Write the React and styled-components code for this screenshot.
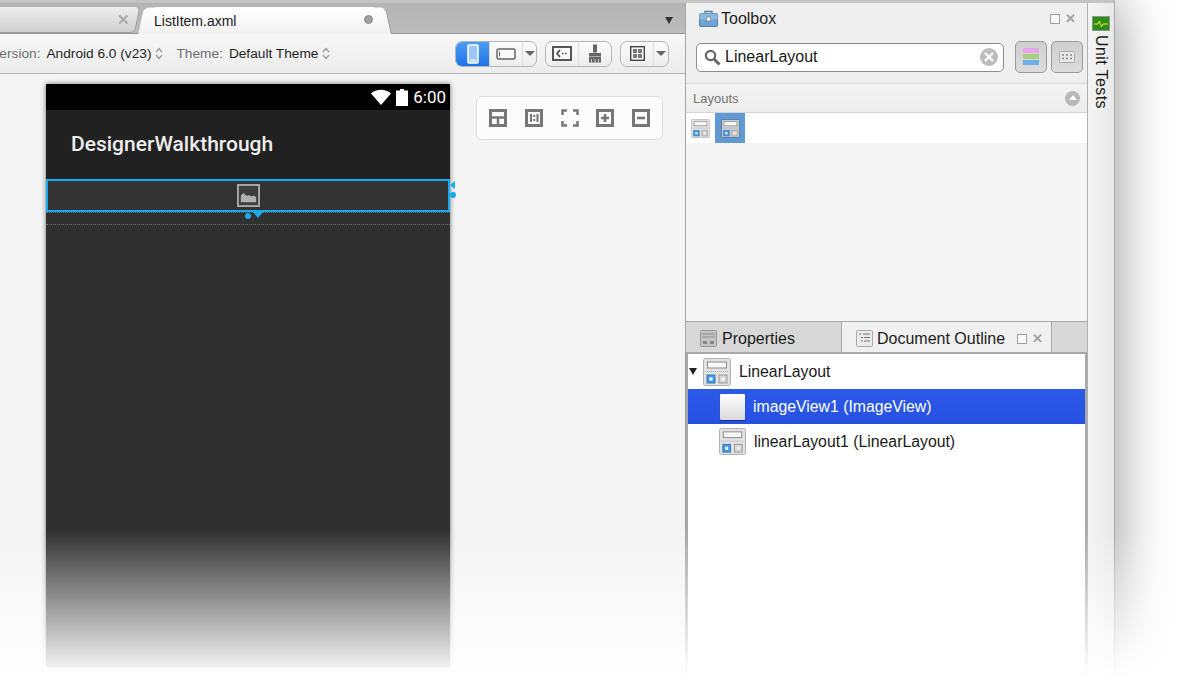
import styled, { createGlobalStyle } from 'styled-components';

const GlobalStyle = createGlobalStyle`
  html, body { margin: 0; padding: 0; background: #fff; }
  body { font-family: "Liberation Sans", Arial, sans-serif; }
`;

const Page = styled.div`
  position: relative;
  width: 1184px;
  height: 680px;
  overflow: hidden;
  background: #fff;
`;

const Fade = styled.div`
  position: absolute;
  left: 0;
  right: 0;
  top: 530px;
  bottom: 0;
  background: linear-gradient(to bottom, rgba(255,255,255,0), rgba(255,255,255,0.93) 137px, #fff 150px);
`;

const Window = styled.div`
  display: flex;
  width: 1115px;
  height: 680px;
  box-sizing: border-box;
  border-top: 3px solid #c4c4c4;
  border-right: 1px solid #a8a8a8;
  box-shadow: 4px 0 50px rgba(0,0,0,0.38);
  background: #f4f4f4;
`;

const Editor = styled.div`
  width: 686px;
  flex: none;
  display: flex;
  flex-direction: column;
  border-right: 1px solid #a4a4a4;
  box-sizing: border-box;
`;

const TabBar = styled.div`
  height: 30px;
  flex: none;
  display: flex;
  align-items: stretch;
  background: linear-gradient(#b4b4b4, #bcbcbc);
  border-bottom: 1px solid #949494;
`;

const InactiveTab = styled.div`
  width: 141px;
  margin-top: 4px;
  background: linear-gradient(#eeeeee, #cfcfcf);
  border-bottom-right-radius: 5px;
  border-top-right-radius: 5px;
  border-right: 1px solid #9a9a9a;
  border-bottom: 1px solid #9a9a9a;
  transform: skewX(-12deg);
  transform-origin: bottom right;
  margin-left: -6px;
  display: flex;
  align-items: center;
  justify-content: flex-end;
  padding-right: 7px;
  box-sizing: border-box;
  flex: none;
`;

const TabClose = styled.span`
  color: #aaa;
  font-size: 15px;
  font-weight: bold;
  transform: skewX(12deg);
`;

const ActiveTab = styled.div`
  position: relative;
  width: 238px;
  margin: 4px 0 -1px 11px;
  background: linear-gradient(#fff, #f2f2f2);
  border-radius: 6px 6px 0 0;
  display: flex;
  align-items: center;
  justify-content: space-between;
  padding: 0 11px 0 8px;
  box-sizing: border-box;
  font-size: 14px;
  color: #222;

  &::before, &::after {
    content: '';
    position: absolute;
    top: 0;
    bottom: 0;
    width: 12px;
    background: inherit;
    border-top: 1px solid #d8d8d8;
  }
  &::before { left: -5px; transform: skewX(-12deg); border-top-left-radius: 6px; }
  &::after { right: -5px; transform: skewX(12deg); border-top-right-radius: 6px; border-right: 1px solid #999; }
`;

const TabLabel = styled.span`
  position: relative;
  z-index: 1;
`;

const ModifiedDot = styled.span`
  position: relative;
  z-index: 1;
  width: 9px;
  height: 9px;
  border-radius: 50%;
  background: #a0a0a0;
  border: 1px solid #888;
  box-sizing: border-box;
  margin-top: -3px;
`;

const TabMenu = styled.div`
  margin: 14px 12px 0 auto;
  width: 0;
  height: 0;
  border-left: 4px solid transparent;
  border-right: 4px solid transparent;
  border-top: 7px solid #333;
`;

const Toolbar = styled.div`
  height: 39px;
  flex: none;
  display: flex;
  align-items: center;
  padding: 0 16px 0 0;
  background: linear-gradient(#f7f7f7, #ececec);
  border-bottom: 1px solid #b4b4b4;
  font-size: 13.7px;
`;

const SelectLabel = styled.span`
  color: #6f6f6f;
  margin: 0 6px 1px ${p => p.$first ? '-9px' : '13px'};
  white-space: nowrap;
`;

const SelectValue = styled.span`
  color: #1e1e1e;
  margin-bottom: 1px;
  white-space: nowrap;
`;

const Stepper = styled.svg`
  width: 8px;
  height: 13px;
  margin: 0 0 1px 4px;
  flex: none;
`;

const ButtonGroups = styled.div`
  margin-left: auto;
  display: flex;
  gap: 8px;
`;

const ButtonGroup = styled.div`
  display: flex;
  height: 26px;
  border: 1px solid #b5b5b5;
  border-radius: 7px;
  overflow: hidden;
  background: linear-gradient(#fbfbfb, #eeeeee);
  box-sizing: border-box;
`;

const ToolButton = styled.div`
  width: ${p => p.$w || 33}px;
  box-sizing: border-box;
  display: flex;
  align-items: center;
  justify-content: center;
  border-right: 1px solid #dddddd;
  background: ${p => p.$active ? 'linear-gradient(#4d9cf4, #1f73e8)' : 'transparent'};
  &:last-child { border-right: none; }
`;

const MenuCaret = styled.span`
  width: 0;
  height: 0;
  border-left: 5px solid transparent;
  border-right: 5px solid transparent;
  border-top: 5px solid #666;
`;

const Canvas = styled.div`
  flex: 1;
  display: flex;
  align-items: flex-start;
  padding: 10px 0 0 46px;
  background: #f4f4f4;
`;

const Phone = styled.div`
  width: 404px;
  height: 583px;
  flex: none;
  display: flex;
  flex-direction: column;
  background: #303030;
  box-shadow: 0 0 5px rgba(0,0,0,0.55);
`;

const StatusBar = styled.div`
  height: 26px;
  flex: none;
  background: #000;
  color: #fff;
  display: flex;
  align-items: center;
  justify-content: flex-end;
  gap: 5px;
  padding-right: 4px;
  font-family: Roboto, sans-serif;
  font-size: 17px;
`;

const ActionBar = styled.div`
  height: 69px;
  flex: none;
  background: #212121;
  display: flex;
  align-items: center;
  padding: 0 0 1px 25px;
  box-sizing: border-box;
  color: #eeeeee;
  font-family: Roboto, sans-serif;
  font-weight: 500;
  font-size: 21px;
`;

const SelectedRow = styled.div`
  position: relative;
  height: 33px;
  flex: none;
  box-sizing: border-box;
  border: 2px solid #18aaee;
  background: #333;
  display: flex;
  align-items: center;
  justify-content: center;
`;

const HandleDot = styled.span`
  position: absolute;
  ${p => p.$place}
  width: 6px;
  height: 6px;
  border-radius: 50%;
  background: #18aaee;
`;

const HandleArrowDown = styled.span`
  position: absolute;
  left: 205px;
  bottom: -8px;
  width: 0;
  height: 0;
  border-left: 5px solid transparent;
  border-right: 5px solid transparent;
  border-top: 6px solid #18aaee;
`;

const HandleArrowLeft = styled.span`
  position: absolute;
  right: -7px;
  top: 0;
  width: 0;
  height: 0;
  border-top: 4px solid transparent;
  border-bottom: 4px solid transparent;
  border-right: 5px solid #18aaee;
`;

const DottedGap = styled.div`
  height: 13px;
  flex: none;
  box-sizing: border-box;
  border-top: 1px dotted #6a6a6a;
  border-bottom: 1px dotted #6a6a6a;
`;

const ZoomPanel = styled.div`
  margin: 12px 0 0 26px;
  width: 187px;
  height: 44px;
  box-sizing: border-box;
  background: #fcfcfc;
  border: 1px solid #dedede;
  border-radius: 6px;
  display: flex;
  align-items: center;
  justify-content: space-between;
  padding: 0 12px;
`;

const SidePanel = styled.div`
  width: 402px;
  flex: none;
  display: flex;
  flex-direction: column;
  border-right: 1px solid #b0b0b0;
  box-sizing: border-box;
  background: #f4f4f4;
`;

const ToolboxPane = styled.div`
  height: 318px;
  flex: none;
  display: flex;
  flex-direction: column;
`;

const PaneHeader = styled.div`
  height: 31px;
  flex: none;
  display: flex;
  align-items: center;
  padding: 0 11px 0 13px;
  background: #efefef;
  font-size: 16px;
  color: #1c1c1c;
  gap: 3px;
`;

const WindowControls = styled.div`
  margin-left: auto;
  display: flex;
  align-items: center;
  gap: 5px;
`;

const MaxBox = styled.span`
  width: 8px;
  height: 8px;
  border: 1px solid #a0a0a0;
  background: #f8f8f8;
`;

const CloseX = styled.span`
  color: #a2a2a2;
  font-size: 13px;
  font-weight: bold;
  line-height: 10px;
`;

const SearchRow = styled.div`
  height: 50px;
  flex: none;
  box-sizing: border-box;
  display: flex;
  align-items: center;
  gap: 4px;
  padding: 0 3px 3px 10px;
  background: #efefef;
  border-bottom: 1px solid #dcdcdc;
`;

const SearchBox = styled.div`
  width: 308px;
  height: 29px;
  box-sizing: border-box;
  margin-right: 7px;
  background: #fff;
  border: 1px solid #8c8c8c;
  border-radius: 5px;
  display: flex;
  align-items: center;
  padding: 0 5px 0 7px;
  gap: 4px;
  font-size: 16px;
  color: #1a1a1a;
`;

const ClearButton = styled.span`
  margin-left: auto;
  width: 18px;
  height: 18px;
  border-radius: 50%;
  background: #bdbdbd;
  display: flex;
  align-items: center;
  justify-content: center;
`;

const ViewToggle = styled.div`
  width: 32px;
  height: 32px;
  box-sizing: border-box;
  border: 1px solid #9a9a9a;
  border-radius: 5px;
  background: linear-gradient(#cfcfcf, #dcdcdc);
  display: flex;
  align-items: center;
  justify-content: center;
`;

const SectionHeader = styled.div`
  height: 29px;
  flex: none;
  display: flex;
  align-items: center;
  justify-content: space-between;
  padding: 0 7px;
  box-sizing: border-box;
  background: linear-gradient(#f3f3f3, #ededed);
  border-bottom: 1px solid #d4d4d4;
  font-size: 13px;
  color: #737373;
`;

const CollapseDot = styled.span`
  width: 15px;
  height: 15px;
  border-radius: 50%;
  background: #b8b8b8;
  display: flex;
  align-items: center;
  justify-content: center;
  &::after {
    content: '';
    border-left: 4px solid transparent;
    border-right: 4px solid transparent;
    border-bottom: 5px solid #fff;
    margin-top: -1px;
  }
`;

const ItemRow = styled.div`
  height: 30px;
  flex: none;
  background: #fff;
  display: flex;
`;

const ItemCell = styled.div`
  width: ${p => p.$w || 30}px;
  display: flex;
  align-items: center;
  justify-content: center;
  background: ${p => p.$selected ? '#5f9ad6' : 'transparent'};
`;

const BottomTabs = styled.div`
  height: 30px;
  flex: none;
  display: flex;
  background: #d8d8d8;
  border-top: 1px solid #a8a8a8;
  border-bottom: 1px solid #a8a8a8;
`;

const PaneTab = styled.div`
  width: ${p => p.$w}px;
  flex: none;
  box-sizing: border-box;
  display: flex;
  align-items: center;
  gap: ${p => p.$active ? 4 : 5}px;
  padding: 3px 8px 0 14px;
  font-size: 16px;
  color: #1c1c1c;
  background: ${p => p.$active ? '#f0f0f0' : 'transparent'};
  border-left: ${p => p.$active ? '1px solid #a8a8a8' : 'none'};
  border-right: ${p => p.$active ? '1px solid #a8a8a8' : 'none'};
`;

const Tree = styled.div`
  flex: 1;
  background: #fff;
  border: 1px solid #a8a8a8;
  border-left-width: 2px;
  border-right-width: 2px;
  font-size: 15.8px;
  color: #1a1a1a;
`;

const TreeRow = styled.div`
  height: 35px;
  box-sizing: border-box;
  display: flex;
  align-items: center;
  gap: 8px;
  padding-left: ${p => p.$indent}px;
  background: ${p => p.$selected ? 'linear-gradient(#2c5ae8, #2650e2)' : 'transparent'};
  color: ${p => p.$selected ? '#fff' : '#1a1a1a'};
`;

const Disclosure = styled.span`
  width: 0;
  height: 0;
  border-left: 4.5px solid transparent;
  border-right: 4.5px solid transparent;
  border-top: 7px solid #222;
  margin-right: -2px;
`;

const BlankImage = styled.span`
  width: 25px;
  height: 26px;
  flex: none;
  border-radius: 1px;
  background: linear-gradient(#fff, #d8d8d8);
  box-shadow: 0 1px 1px #1a2f80;
`;

const RightRail = styled.div`
  flex: 1;
  background: linear-gradient(to right, #f4f4f4, #e8e8e8);
  display: flex;
  flex-direction: column;
  align-items: center;
  padding-top: 13px;
  gap: 4px;
`;

const RailLabel = styled.span`
  writing-mode: vertical-rl;
  font-size: 16px;
  color: #1a1a1a;
  letter-spacing: 0.4px;
`;

function Chevrons() {
  return (
    <Stepper viewBox="0 0 8 13">
      <path d="M1 5l3-3.5L7 5M1 8l3 3.5L7 8" fill="none" stroke="#9a9a9a" strokeWidth="1.3" />
    </Stepper>
  );
}

function LayoutIcon({ size = 28, dark }) {
  return (
    <svg width={size} height={size} viewBox="0 0 28 28">
      <rect x="0.5" y="0.5" width="27" height="27" rx="2" fill={dark ? '#c8ccd2' : '#e2e2e2'} stroke={dark ? '#33506e' : '#b0b0b0'} />
      <rect x="4.5" y="4" width="19" height="6" fill="#f7f7f7" stroke="#8a8a8a" />
      <path d="M2 13.5h24" stroke="#aaa" strokeDasharray="1 1" />
      <rect x="4" y="17" width="8" height="8" fill="#4a9be0" stroke="#2d78bd" />
      <rect x="6.5" y="19.5" width="3" height="3" fill="#fff" />
      <rect x="16" y="17" width="8" height="8" fill="#d4d4d4" stroke="#9a9a9a" />
      <rect x="18.5" y="19.5" width="3" height="3" fill="#f4f4f4" />
    </svg>
  );
}

function ToolboxIcon() {
  return (
    <svg width="19" height="17" viewBox="0 0 19 17">
      <path d="M6 4V1.5h7V4" fill="none" stroke="#5c7d9c" strokeWidth="1.4" />
      <rect x="0.5" y="3.5" width="18" height="13" rx="1.5" fill="#6fa3d2" stroke="#55809f" />
      <rect x="0.5" y="3.5" width="18" height="6" fill="#8ab8de" />
      <rect x="7.5" y="7" width="4" height="4" fill="#f2f2f2" stroke="#5c7d9c" strokeWidth="0.6" />
    </svg>
  );
}

const zoomStroke = { fill: 'none', stroke: '#777', strokeWidth: 3 };

const zoomIcons = [
  <g key="a" {...zoomStroke}><rect x="1.5" y="1.5" width="15" height="15" /><path d="M1 8.5h16M9 8.5v8" strokeWidth="2.5" /></g>,
  <g key="b" {...zoomStroke}><rect x="1.5" y="1.5" width="15" height="15" /><path d="M6 5v8M12.5 5v8M9.2 6v2M9.2 10v2" strokeWidth="2" /></g>,
  <g key="c" {...zoomStroke}><path d="M1.5 6V1.5H6M12 1.5h4.5V6M16.5 12v4.5H12M6 16.5H1.5V12" strokeWidth="2.5" /></g>,
  <g key="d" {...zoomStroke}><rect x="1.5" y="1.5" width="15" height="15" /><path d="M5 9h8M9 5v8" strokeWidth="2.6" /></g>,
  <g key="e" {...zoomStroke}><rect x="1.5" y="1.5" width="15" height="15" /><path d="M5 9h8" strokeWidth="2.6" /></g>,
];

export default function App() {
  return (
    <Page>
      <GlobalStyle />
      <Window>
        <Editor>
          <TabBar>
            <InactiveTab><TabClose>✕</TabClose></InactiveTab>
            <ActiveTab>
              <TabLabel>ListItem.axml</TabLabel>
              <ModifiedDot />
            </ActiveTab>
            <TabMenu />
          </TabBar>
          <Toolbar>
            <SelectLabel $first>Version:</SelectLabel>
            <SelectValue>Android 6.0 (v23)</SelectValue>
            <Chevrons />
            <SelectLabel>Theme:</SelectLabel>
            <SelectValue>Default Theme</SelectValue>
            <Chevrons />
            <ButtonGroups>
              <ButtonGroup>
                <ToolButton $active $w={34}>
                  <svg width="12" height="20" viewBox="0 0 12 20"><rect x="1" y="1" width="10" height="18" rx="1" fill="#9cc6f8" stroke="#fff" strokeWidth="1.6" /><path d="M3 16.5h6" stroke="#fff" strokeWidth="1.5" /></svg>
                </ToolButton>
                <ToolButton>
                  <svg width="20" height="12" viewBox="0 0 20 12"><rect x="1" y="1" width="18" height="10" rx="1.5" fill="#fafafa" stroke="#666" strokeWidth="1.5" /><path d="M3.5 3.5v5" stroke="#666" /></svg>
                </ToolButton>
                <ToolButton $w={13}><MenuCaret /></ToolButton>
              </ButtonGroup>
              <ButtonGroup>
                <ToolButton>
                  <svg width="20" height="15" viewBox="0 0 20 15"><rect x="1" y="1" width="18" height="13" fill="#fafafa" stroke="#444" strokeWidth="1.8" /><path d="M8 4L5 7.5 8 11M10 7.5h1.5M13 7.5h1.5" fill="none" stroke="#444" strokeWidth="1.6" /></svg>
                </ToolButton>
                <ToolButton $w={32}>
                  <svg width="14" height="19" viewBox="0 0 14 19"><path d="M5 0.5h4v8H5zM1 9h12v3.5H1zM1 13h12v5.5H1z" fill="#666" /><path d="M3.5 15v3.5M7 15v3.5M10.5 15v3.5" stroke="#ddd" strokeWidth="0.8" /></svg>
                </ToolButton>
              </ButtonGroup>
              <ButtonGroup>
                <ToolButton>
                  <svg width="15" height="15" viewBox="0 0 15 15"><rect x="0.7" y="0.7" width="13.6" height="13.6" fill="#fafafa" stroke="#444" strokeWidth="1.4" /><path d="M3 3h4v4H3zM8 3h4v4H8zM3 8h4v4H3zM8 8h4v4H8z" fill="#777" /></svg>
                </ToolButton>
                <ToolButton $w={14}><MenuCaret /></ToolButton>
              </ButtonGroup>
            </ButtonGroups>
          </Toolbar>
          <Canvas>
            <Phone>
              <StatusBar>
                <svg width="20" height="16" viewBox="0 0 20 16"><path d="M0 4.5C5.5 -0.5 14.5 -0.5 20 4.5L10 16z" fill="#fff" /></svg>
                <svg width="12" height="17" viewBox="0 0 12 17"><path d="M4 0h4v1.5h4V17H0V1.5h4z" fill="#fff" /></svg>
                <span>6:00</span>
              </StatusBar>
              <ActionBar>DesignerWalkthrough</ActionBar>
              <SelectedRow>
                <svg width="23" height="23" viewBox="0 0 24 24">
                  <rect x="1" y="1" width="22" height="22" fill="#3c3c3c" stroke="#a8a8a8" strokeWidth="2" />
                  <path d="M4 19v-7l3-2.500 3 3 2-1 3 1.500 2-1 3 1.500v5.500z" fill="#b0b0b0" />
                </svg>
                <HandleArrowLeft />
                <HandleDot $place="right: -8px; top: 11px;" />
                <HandleDot $place="left: 197px; bottom: -9px;" />
                <HandleArrowDown />
              </SelectedRow>
              <DottedGap />
            </Phone>
            <ZoomPanel>
              {zoomIcons.map((icon, i) => (
                <svg key={i} width="18" height="18" viewBox="0 0 18 18">{icon}</svg>
              ))}
            </ZoomPanel>
          </Canvas>
        </Editor>

        <SidePanel>
          <ToolboxPane>
            <PaneHeader>
              <ToolboxIcon />
              Toolbox
              <WindowControls>
                <MaxBox />
                <CloseX>✕</CloseX>
              </WindowControls>
            </PaneHeader>
            <SearchRow>
              <SearchBox>
                <svg width="17" height="17" viewBox="0 0 17 17"><circle cx="6.5" cy="6.5" r="4.7" fill="none" stroke="#666" strokeWidth="2.2" /><path d="M10 10l5.500 5.500" stroke="#666" strokeWidth="2.8" /></svg>
                LinearLayout
                <ClearButton>
                  <svg width="10" height="10" viewBox="0 0 10 10"><path d="M1 1l8 8M9 1l-8 8" stroke="#fff" strokeWidth="2.4" /></svg>
                </ClearButton>
              </SearchBox>
              <ViewToggle>
                <svg width="16" height="18" viewBox="0 0 16 18"><rect width="16" height="5" fill="#e8a4e8" /><rect y="6" width="16" height="5" fill="#a9d07c" /><rect y="12" width="16" height="5" fill="#6db0ea" /></svg>
              </ViewToggle>
              <ViewToggle>
                <svg width="16" height="12" viewBox="0 0 16 12"><rect x="0.5" y="0.5" width="15" height="11" rx="1" fill="#e8e8e8" stroke="#aaa" /><path d="M3 4h2M7 4h2M11 4h2M3 7.5h2M7 7.5h2M11 7.5h2" stroke="#888" strokeWidth="1.5" /></svg>
              </ViewToggle>
            </SearchRow>
            <SectionHeader>
              Layouts
              <CollapseDot />
            </SectionHeader>
            <ItemRow>
              <ItemCell $w={29}><LayoutIcon size={19} /></ItemCell>
              <ItemCell $selected><LayoutIcon size={19} dark /></ItemCell>
            </ItemRow>
          </ToolboxPane>
          <BottomTabs>
            <PaneTab $w={155}>
              <svg width="17" height="17" viewBox="0 0 17 17"><rect x="0.5" y="0.5" width="16" height="16" rx="1" fill="#c4c4c4" stroke="#999" /><path d="M2 4h13M2 7h13" stroke="#8a8a8a" /><rect x="3" y="11" width="4" height="3" fill="#888" /><rect x="10" y="11" width="4" height="3" fill="#888" /></svg>
              Properties
            </PaneTab>
            <PaneTab $active $w={211}>
              <svg width="17" height="17" viewBox="0 0 17 17"><rect x="0.5" y="0.5" width="16" height="16" rx="1" fill="#eaeaea" stroke="#aaa" /><path d="M3 4h2M7 4h7M5 7.5h2M8 7.5h6M5 11h2M8 11h6" stroke="#777" /></svg>
              Document Outline
              <WindowControls>
                <MaxBox />
                <CloseX>✕</CloseX>
              </WindowControls>
            </PaneTab>
          </BottomTabs>
          <Tree>
            <TreeRow $indent={1}>
              <Disclosure />
              <LayoutIcon />
              LinearLayout
            </TreeRow>
            <TreeRow $indent={32} $selected>
              <BlankImage />
              imageView1 (ImageView)
            </TreeRow>
            <TreeRow $indent={31}>
              <LayoutIcon size={27} />
              linearLayout1 (LinearLayout)
            </TreeRow>
          </Tree>
        </SidePanel>

        <RightRail>
          <svg width="18" height="15" viewBox="0 0 18 15"><rect x="0.5" y="0.5" width="17" height="14" fill="#2f8c18" stroke="#8a9a8a" /><path d="M2 8h4l1.500-3 2 6 1.500-3h5" fill="none" stroke="#e8e830" /></svg>
          <RailLabel>Unit Tests</RailLabel>
        </RightRail>
      </Window>
      <Fade />
    </Page>
  );
}
